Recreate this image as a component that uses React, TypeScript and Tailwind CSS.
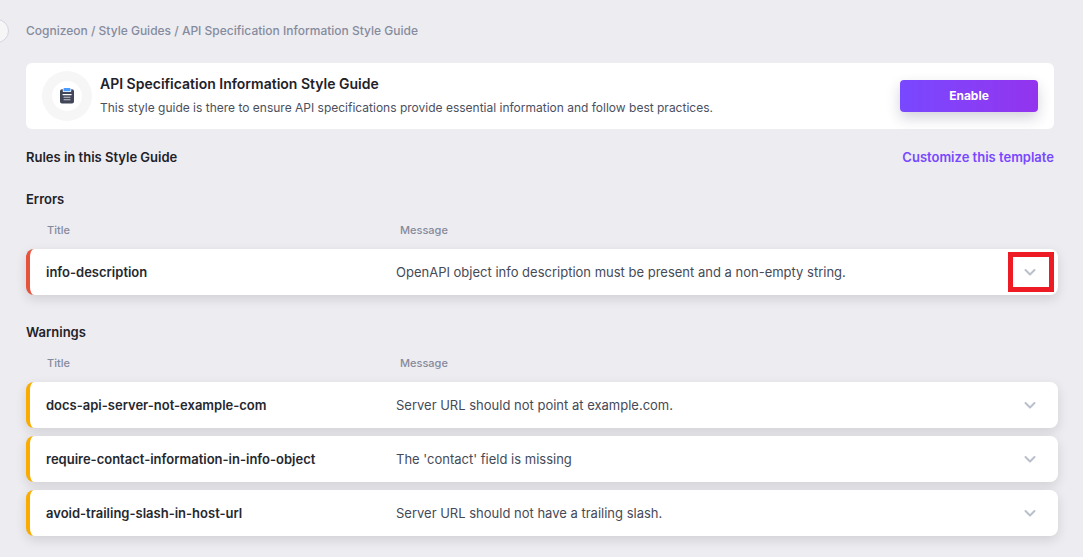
import React, { useState } from "react";

type Rule = { title: string; message: string; highlighted?: boolean };

const errors: Rule[] = [
  {
    title: "info-description",
    message: "OpenAPI object info description must be present and a non-empty string.",
    highlighted: true,
  },
];

const warnings: Rule[] = [
  { title: "docs-api-server-not-example-com", message: "Server URL should not point at example.com." },
  { title: "require-contact-information-in-info-object", message: "The 'contact' field is missing" },
  { title: "avoid-trailing-slash-in-host-url", message: "Server URL should not have a trailing slash." },
];

function ClipboardIcon() {
  return (
    <svg width="16" height="18" viewBox="0 0 16 18" aria-hidden="true">
      <path d="M3 2.200h10a2 2 0 0 1 2 2v10.200a2 2 0 0 1-2 2H3a2 2 0 0 1-2-2V4.200a2 2 0 0 1 2-2z" fill="#414659" />
      <path d="M3.800 2h8.400v2.200a.8.800 0 0 1-.8.800H4.600a.8.800 0 0 1-.8-.8z" fill="#fff" />
      <path d="M5.300 1h5.400a.8.800 0 0 1 .8.800v1.700a.8.800 0 0 1-.8.800H5.300a.8.800 0 0 1-.8-.8V1.800a.8.800 0 0 1 .8-.8z" fill="#4a9bff" />
      <path d="M4 7.600h8.200" stroke="#fff" strokeWidth="1.1" strokeLinecap="round" />
      <path d="M5 10.200h6M5 12.800h6" stroke="#c5c8d0" strokeWidth="1.1" strokeLinecap="round" />
    </svg>
  );
}

function Chevron() {
  return (
    <svg width="12" height="8" viewBox="0 0 12 8" fill="none" aria-hidden="true">
      <path d="M1.500 2 6 6.500 10.500 2" stroke="#b9bfcb" strokeWidth="2" strokeLinecap="round" strokeLinejoin="round" />
    </svg>
  );
}

function RuleRow({ rule, accent }: { rule: Rule; accent: string }) {
  const [open, setOpen] = useState(false);
  return (
    <tr
      className={`grid min-h-[46px] grid-cols-[350px_1fr_auto] items-center rounded-lg border-l-4 bg-white pr-1 pl-4 shadow-[0_4px_12px_rgba(0,0,0,0.12)] ${accent}`}
    >
      <td className="text-[13px] leading-5 font-semibold text-[#25282f]">{rule.title}</td>
      <td className="text-[13px] leading-5 text-[#454a57]">{rule.message}</td>
      <td className="relative">
        <button
          type="button"
          aria-label={`Details of ${rule.title}`}
          aria-expanded={open}
          onClick={() => setOpen(!open)}
          className="flex h-10 w-[46px] items-center justify-center pr-0.5"
        >
          <Chevron />
        </button>
        {rule.highlighted && (
          <span aria-hidden="true" className="pointer-events-none absolute inset-0 border-5 border-[#ed1c24]" />
        )}
      </td>
    </tr>
  );
}

function RuleSection({ name, rules, accent }: { name: string; rules: Rule[]; accent: string }) {
  return (
    <section className="-mr-1">
      <h3 className="text-[13px] leading-5 font-semibold text-[#1f2229]">{name}</h3>
      <table aria-label={name} className="mt-[11px] block">
        <thead className="block">
          <tr className="grid grid-cols-[353px_1fr] pl-[21px] text-left text-[11px] leading-5 text-[#858a9c]">
            <th className="font-medium">Title</th>
            <th className="font-medium">Message</th>
          </tr>
        </thead>
        <tbody className="mt-[9px] flex flex-col gap-2">
          {rules.map((rule) => (
            <RuleRow key={rule.title} rule={rule} accent={accent} />
          ))}
        </tbody>
      </table>
    </section>
  );
}

export default function App() {
  return (
    <div className="relative min-h-screen overflow-hidden bg-[#edecf1] pt-[21px] pr-[29px] pb-[21px] pl-[26px] font-['Inter',sans-serif]">
      <button
        type="button"
        aria-label="Toggle sidebar"
        className="absolute top-[19px] -left-[15px] size-6 rounded-full border border-[#d3d4e0] bg-[#f6f6f7]"
      />
      <nav aria-label="Breadcrumb" className="text-xs leading-5 font-medium text-[#858b9d]">
        <a href="#home">Cognizeon</a> / <a href="#guides">Style Guides</a> /{" "}
        <a href="#guide" aria-current="page">API Specification Information Style Guide</a>
      </nav>

      <header className="mt-[22px] flex min-h-[66px] items-center rounded-md bg-white px-4">
        <div className="flex size-[50px] shrink-0 items-center justify-center rounded-full bg-[#f6f6f6]">
          <div className="flex size-[30px] items-center justify-center rounded-full bg-white">
            <ClipboardIcon />
          </div>
        </div>
        <div className="ml-2 flex-1">
          <h1 className="text-sm leading-6 font-semibold text-[#1f2229]">API Specification Information Style Guide</h1>
          <p className="text-xs leading-6 text-[#4b505e]">
            This style guide is there to ensure API specifications provide essential information and follow best practices.
          </p>
        </div>
        <button
          type="button"
          className="h-8 w-[138px] rounded bg-linear-to-r from-[#7848ff] to-[#9333ee] text-xs font-bold text-white shadow-[0_6px_14px_rgba(40,30,80,0.2)]"
        >
          Enable
        </button>
      </header>

      <div className="mt-[18px] flex items-center justify-between text-[13px] leading-5 font-semibold">
        <h2 className="text-[#1f2229]">Rules in this Style Guide</h2>
        <a href="#customize" className="text-[#7848ff]">Customize this template</a>
      </div>

      <div className="mt-[22px] flex flex-col gap-[27px]">
        <RuleSection name="Errors" rules={errors} accent="border-[#e5533d]" />
        <RuleSection name="Warnings" rules={warnings} accent="border-[#f9ab00]" />
      </div>
    </div>
  );
}
